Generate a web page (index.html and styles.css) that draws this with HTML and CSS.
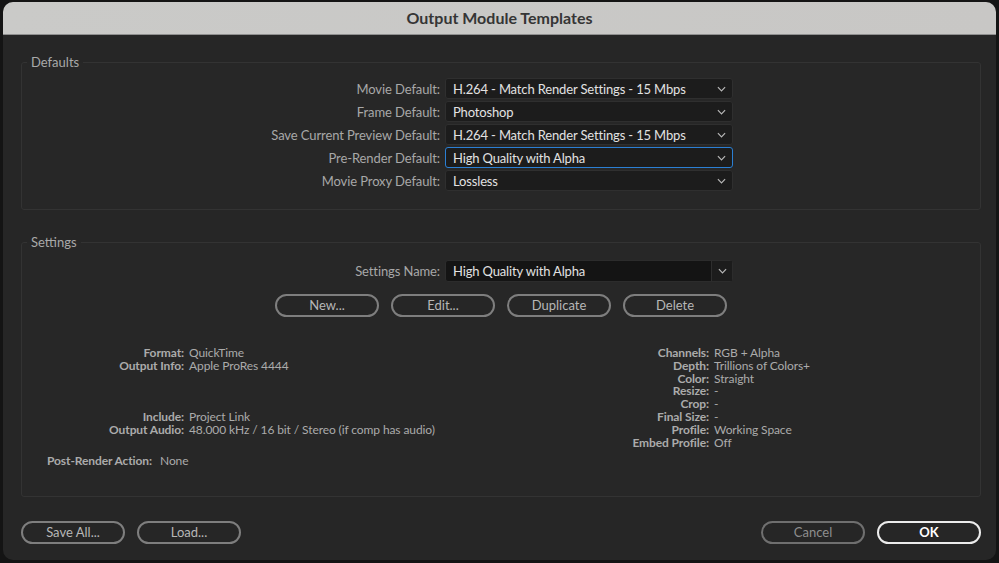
FILE: index.html
```html
<!DOCTYPE html>
<html>
<head>
<meta charset="utf-8">
<link rel="stylesheet" href="styles.css">
</head>
<body>
<div class="dialog">
  <div class="titlebar">Output Module Templates</div>
  <div class="content">
    <fieldset class="group defaults">
      <legend>Defaults</legend>
      <div class="form">
        <label class="flabel">Movie Default:</label>
        <div class="select"><span>H.264 - Match Render Settings - 15 Mbps</span><svg class="chev" viewBox="0 0 10 6"><path d="M1 1 L5 5 L9 1"/></svg></div>
        <label class="flabel">Frame Default:</label>
        <div class="select"><span>Photoshop</span><svg class="chev" viewBox="0 0 10 6"><path d="M1 1 L5 5 L9 1"/></svg></div>
        <label class="flabel">Save Current Preview Default:</label>
        <div class="select"><span>H.264 - Match Render Settings - 15 Mbps</span><svg class="chev" viewBox="0 0 10 6"><path d="M1 1 L5 5 L9 1"/></svg></div>
        <label class="flabel">Pre-Render Default:</label>
        <div class="select focused"><span>High Quality with Alpha</span><svg class="chev" viewBox="0 0 10 6"><path d="M1 1 L5 5 L9 1"/></svg></div>
        <label class="flabel">Movie Proxy Default:</label>
        <div class="select"><span>Lossless</span><svg class="chev" viewBox="0 0 10 6"><path d="M1 1 L5 5 L9 1"/></svg></div>
      </div>
    </fieldset>

    <fieldset class="group settings">
      <legend>Settings</legend>
      <div class="form">
        <label class="flabel">Settings Name:</label>
        <div class="combo"><span class="combo-text">High Quality with Alpha</span><span class="combo-btn"><svg class="chev" viewBox="0 0 10 6"><path d="M1 1 L5 5 L9 1"/></svg></span></div>
      </div>
      <div class="actions">
        <button class="pill">New...</button>
        <button class="pill">Edit...</button>
        <button class="pill">Duplicate</button>
        <button class="pill">Delete</button>
      </div>
      <div class="info">
        <div class="info-left">
          <div class="kv">
            <span class="k">Format:</span><span class="v">QuickTime</span>
            <span class="k">Output Info:</span><span class="v">Apple ProRes 4444</span>
            <span class="k blank"></span><span class="v blank"></span>
            <span class="k blank"></span><span class="v blank"></span>
            <span class="k blank"></span><span class="v blank"></span>
            <span class="k">Include:</span><span class="v">Project Link</span>
            <span class="k">Output Audio:</span><span class="v">48.000 kHz / 16 bit / Stereo (if comp has audio)</span>
          </div>
          <div class="post"><span class="k">Post-Render Action:</span><span class="v">None</span></div>
        </div>
        <div class="info-right">
          <div class="kv kv-right">
            <span class="k">Channels:</span><span class="v">RGB + Alpha</span>
            <span class="k">Depth:</span><span class="v">Trillions of Colors+</span>
            <span class="k">Color:</span><span class="v">Straight</span>
            <span class="k">Resize:</span><span class="v">-</span>
            <span class="k">Crop:</span><span class="v">-</span>
            <span class="k">Final Size:</span><span class="v">-</span>
            <span class="k">Profile:</span><span class="v">Working Space</span>
            <span class="k">Embed Profile:</span><span class="v">Off</span>
          </div>
        </div>
      </div>
    </fieldset>

    <div class="footer">
      <div class="btn-group">
        <button class="pill">Save All...</button>
        <button class="pill">Load...</button>
      </div>
      <div class="btn-group">
        <button class="pill cancel">Cancel</button>
        <button class="pill ok">OK</button>
      </div>
    </div>
  </div>
</div>
</body>
</html>
```

FILE: styles.css
```css
* { box-sizing: border-box; }

html, body {
  margin: 0;
  padding: 0;
  height: 563px;
  overflow: hidden;
  background: #141414;
  font-family: "Lato", "Open Sans", sans-serif;
}

.dialog {
  margin: 2px 3px 0 3px;
  width: 993px;
  height: 558px;
  background: #262626;
  border-radius: 10px;
  overflow: hidden;
}

.titlebar {
  height: 33px;
  background: linear-gradient(to right, #cacac8, #c8c7c5);
  border-bottom: 1px solid #8f8f8f;
  color: #353535;
  font-weight: 700;
  font-size: 16px;
  line-height: 32px;
  text-align: center;
}

.content {
  padding: 19px 15px 0 18px;
}

.group {
  margin: 0;
  padding: 0;
  border: 1px solid #333333;
  border-radius: 3px;
  background: #272727;
  min-width: 0;
}

.group legend {
  margin-left: 5px;
  padding: 0 4px;
  font-size: 13px;
  line-height: 16px;
  color: #a9a9a9;
}

.defaults {
  padding: 8px 0 18px 0;
}

.settings {
  margin-top: 24px;
  padding: 10px 0 29px 0;
}

.form {
  display: grid;
  grid-template-columns: 418px 288px;
  column-gap: 5px;
  row-gap: 2px;
  align-items: center;
}

.flabel {
  text-align: right;
  color: #a8a8a8;
  font-size: 13px;
  letter-spacing: -0.1px;
  white-space: nowrap;
}

.select {
  height: 21px;
  background: #1c1c1c;
  border: 1px solid #2f2f2f;
  border-radius: 3px;
  display: flex;
  align-items: center;
  justify-content: space-between;
  padding: 0 6px 0 7px;
  color: #e2e2e2;
  font-size: 13px;
  letter-spacing: -0.15px;
}

.select.focused {
  border-color: #2b7fd3;
}

.chev {
  width: 9px;
  height: 6px;
  fill: none;
  stroke: #b8b8b8;
  stroke-width: 1.3;
}

.combo {
  height: 22px;
  background: #141414;
  border: 1px solid #2c2c2c;
  border-radius: 3px;
  display: flex;
  align-items: stretch;
  color: #e2e2e2;
  font-size: 13px;
  letter-spacing: -0.15px;
}

.combo-text {
  flex: 1;
  display: flex;
  align-items: center;
  padding-left: 7px;
}

.combo-btn {
  width: 21px;
  border-left: 1px solid #2e2e2e;
  background: #1c1c1c;
  display: flex;
  align-items: center;
  justify-content: center;
}

.actions {
  display: flex;
  justify-content: center;
  gap: 12px;
  margin-top: 12px;
}

.pill {
  width: 104px;
  height: 23px;
  padding: 0;
  border: 2px solid #7e7e7e;
  border-radius: 12px;
  background: #262626;
  color: #b7b7b7;
  font-family: "Lato", "Open Sans", sans-serif;
  font-size: 13px;
  line-height: 19px;
  text-align: center;
}

.pill.cancel {
  color: #8e8e8e;
  border-color: #6f6f6f;
}

.pill.ok {
  border-color: #ececec;
  color: #ffffff;
  font-weight: 700;
}

.info {
  display: flex;
  margin-top: 30px;
  font-size: 12px;
  line-height: 12.8px;
  letter-spacing: -0.1px;
}

.info-left {
  width: 520px;
}

.kv {
  display: grid;
  grid-template-columns: 162px auto;
  column-gap: 5px;
}

.kv-right {
  grid-template-columns: 167px auto;
}

.k {
  text-align: right;
  font-weight: 700;
  color: #ababab;
  white-space: nowrap;
}

.v {
  color: #ababab;
  white-space: nowrap;
}

.blank {
  height: 12.8px;
}

.post {
  margin-top: 18px;
  padding-left: 25px;
  display: flex;
  gap: 8px;
}

.footer {
  display: flex;
  justify-content: space-between;
  margin-top: 24px;
}

.btn-group {
  display: flex;
  gap: 12px;
}
```
